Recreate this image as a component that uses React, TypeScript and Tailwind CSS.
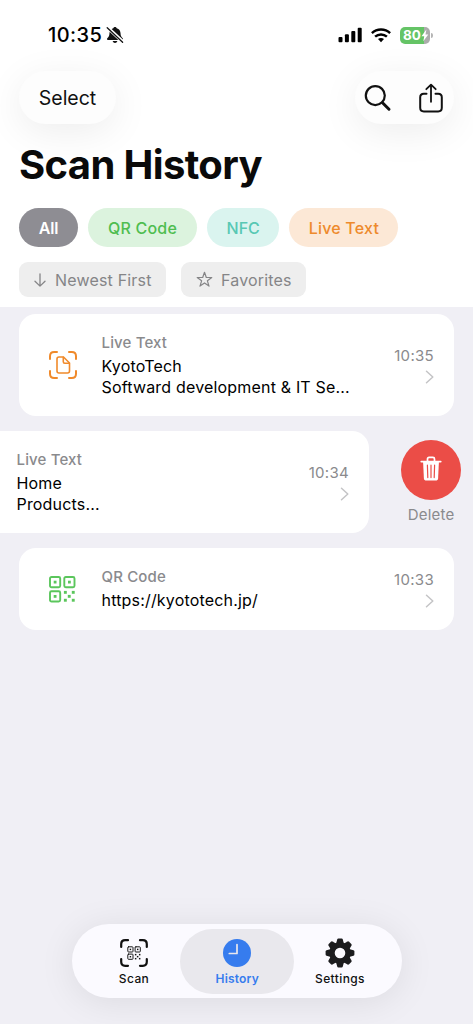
import React from 'react'

type ScanItem = {
    kind: "Live Text" | "QR Code";
    lines: string[];
    time: string;
}

const items: ScanItem[] = [
    { kind: "Live Text", lines: ["KyotoTech", "Softward development & IT Se..."], time: "10:35" },
    { kind: "Live Text", lines: ["Home", "Products..."], time: "10:34" },
    { kind: "QR Code", lines: ["https://kyototech.jp/"], time: "10:33" },
];

const filters = [
    { label: "All", style: "w-[59px] bg-[#8e8d93] text-white font-semibold tracking-[-0.2px]" },
    { label: "QR Code", style: "w-[109px] bg-[#dcf3de] text-[#4fbd50] font-medium tracking-[0.2px]" },
    { label: "NFC", style: "w-[72.4px] bg-[#daf4ef] text-[#58c8b4] font-medium" },
    { label: "Live Text", style: "w-[109px] bg-[#fce8d6] text-[#ee8a2c] font-medium tracking-[0.2px]" },
];

function StatusBar() {
    return (
        <div className="flex h-[71px] items-start pl-[48px] pr-[40px]">
            <div className="mt-[23px] flex w-full items-center text-black">
                <span className="text-[20px] leading-6 font-medium tracking-[0.4px] w-[54px] whitespace-nowrap">10:35</span>
                <svg className="ml-[4px]" width="18" height="18" viewBox="0 0 18 18">
                    <path d="M9 .9c-.9 0-1.600.6-1.700 1.400C4.800 3 3.600 4.800 3.500 7c-.1 3-.8 3.800-2.200 5.200-.6.6-.3 1.700.6 1.700h14.200c.9 0 1.200-1.100.6-1.700-1.400-1.400-2.100-2.200-2.200-5.200-.1-2.200-1.300-4-3.800-4.700C10.600 1.500 9.900.9 9 .9Z" fill="#111" />
                    <path d="M6.600 15h4.800c-.4 1.300-1.300 2-2.400 2s-2-.7-2.400-2Z" fill="#111" />
                    <path d="M1.500 1.500 17 16" stroke="#fff" strokeWidth="3.400" />
                    <path d="M1.200 1.800 16.600 16.300" stroke="#111" strokeWidth="1.300" strokeLinecap="round" />
                </svg>
                <svg className="ml-auto" width="25" height="16" viewBox="0 0 25 16">
                    <rect x="0.500" y="10" width="4" height="5.300" rx="1" />
                    <rect x="6.900" y="7.300" width="4" height="8" rx="1" />
                    <rect x="13.300" y="4" width="4" height="11.300" rx="1" />
                    <rect x="19.700" y="0.700" width="4" height="14.600" rx="1" />
                </svg>
                <svg className="ml-[8px]" width="20" height="15" viewBox="0 0 20 15" fill="none" stroke="#000" strokeWidth="2.500">
                    <path d="M.9 5.200C6 .4 14 .4 19.100 5.200" />
                    <path d="M4.100 8.700c3.400-3.100 8.400-3.100 11.800 0" />
                    <path d="m10 14.200-3-3.100c1.700-1.500 4.300-1.500 6 0Z" fill="#000" stroke="none" />
                </svg>
                <div className="ml-[9px] flex items-center">
                    <div className="flex h-[17px] w-[30px] items-center rounded-[5px] bg-linear-to-r from-[#65c466] from-80% to-[#acacac] to-80% pl-[3px]">
                        <span className="pt-px text-[13.500px] leading-none font-bold text-white tracking-[-0.1px]">80</span>
                        <svg className="shrink-0" width="8" height="13" viewBox="0 0 8 13">
                            <path d="M5.400.6.500 7.200h2.800L2.300 12.300l5-6.800H4.500Z" fill="#fff" />
                        </svg>
                    </div>
                    <div className="ml-[1px] h-[5px] w-[2px] rounded-r-full bg-[#b5b5b5]" />
                </div>
            </div>
        </div>
    )
}

function Toolbar() {
    return (
        <div className="flex h-[53px] justify-between pl-[19px] pr-[19px]">
            <button className="w-[97px] rounded-full bg-[#fdfdfd] pt-[2px] text-[19.500px] text-[#111] shadow-[0_8px_38px_rgba(0,0,0,0.075)]">
                Select
            </button>
            <div className="flex w-[99px] items-center rounded-full bg-[#fdfdfd] shadow-[0_8px_38px_rgba(0,0,0,0.075)]">
                <svg className="ml-[9px]" width="28" height="28" viewBox="0 0 28 28" fill="none" stroke="#111" strokeLinecap="round">
                    <circle cx="11.300" cy="11.600" r="9.500" strokeWidth="2.200" />
                    <path d="m18.500 18.700 6.500 6.500" strokeWidth="3" />
                </svg>
                <svg className="ml-[25px]" width="28" height="32" viewBox="0 0 28 32" fill="none" stroke="#111" strokeWidth="2" strokeLinecap="round" strokeLinejoin="round">
                    <path d="M9.500 11.700H6.800c-2.300 0-3.600 1.300-3.600 3.600v10.500c0 2.300 1.300 3.600 3.600 3.600h14.400c2.300 0 3.600-1.300 3.600-3.600V15.300c0-2.300-1.300-3.600-3.600-3.600h-2.700" />
                    <path d="M14 19.800V3M9.300 7.200 14 2.600l4.700 4.600" strokeWidth="1.800" />
                </svg>
            </div>
        </div>
    )
}

function Finder({ size }: { size: string }) {
    return (
        <svg className={size} viewBox="0 0 28 28" fill="none" stroke="#f08a2b" strokeWidth="2" strokeLinecap="round" strokeLinejoin="round">
            <path d="M1 8V5.200C1 2.500 2.500 1 5.200 1H8M20 1h2.800C25.500 1 27 2.500 27 5.200V8M27 20v2.800c0 2.700-1.500 4.200-4.200 4.200H20M8 27H5.200C2.500 27 1 25.500 1 22.800V20" />
            <path d="M10 6h4.500l6 6v8c0 1.300-.7 2-2 2H10c-1.300 0-2-.7-2-2V8c0-1.300.7-2 2-2Z" strokeWidth="1.600" />
            <path d="M14.300 6.300v4.400c0 1 .5 1.500 1.500 1.500h4.500" strokeWidth="1.600" />
        </svg>
    )
}

function QrShape() {
    return (
        <>
            <g fill="none" stroke="currentColor" strokeWidth="1.900">
                <rect x="1" y="1" width="10.200" height="10.200" rx="1.500" />
                <rect x="15.300" y="1" width="10.200" height="10.200" rx="1.500" />
                <rect x="1" y="15.300" width="10.200" height="10.200" rx="1.500" />
            </g>
            <g fill="currentColor">
                <rect x="4.700" y="4.700" width="2.800" height="2.800" />
                <rect x="19" y="4.700" width="2.800" height="2.800" />
                <rect x="4.700" y="19" width="2.800" height="2.800" />
                <rect x="14.900" y="14.900" width="2.900" height="2.900" />
                <rect x="22.800" y="14.900" width="2.900" height="2.900" />
                <rect x="18.800" y="18.900" width="2.900" height="2.900" />
                <rect x="14.900" y="22.800" width="2.900" height="2.900" />
                <rect x="22.800" y="22.800" width="2.900" height="2.900" />
            </g>
        </>
    )
}

function HistoryCard({ item }: { item: ScanItem }) {
    return (
        <div className="flex w-[435px] shrink-0 rounded-[17px] bg-white pl-[30px] pr-[20px]">
            <div className="flex w-[52.500px] shrink-0 items-center">
                {item.kind === "Live Text" ? (
                    <Finder size="w-[28px] h-[28px]" />
                ) : (
                    <svg className="w-[27px] h-[27px] text-[#5bc65c]" viewBox="0 0 27 27">
                        <QrShape />
                    </svg>
                )}
            </div>
            <div className="flex grow flex-col pt-[18px] pb-[18px]">
                <p className="mb-[3px] text-[15px] leading-[21px] font-medium tracking-[0.15px] text-[#8a8a8d]">{item.kind}</p>
                {item.lines.map((line) => (
                    <p key={line} className="text-[16px] leading-[20.500px] tracking-[0.18px] text-black whitespace-nowrap">{line}</p>
                ))}
            </div>
            <div className="flex flex-col items-end justify-center">
                <span className="text-[15px] leading-[20px] tracking-[0.3px] text-[#8a8a8d]">{item.time}</span>
                <svg className="mt-[4px]" width="9" height="14" viewBox="0 0 9 14" fill="none" stroke="#c4c4c6" strokeWidth="1.500" strokeLinecap="round" strokeLinejoin="round">
                    <path d="m1.500 1.200 6.300 5.800-6.300 5.800" />
                </svg>
            </div>
        </div>
    )
}

function DeleteAction() {
    return (
        <div className="ml-[32px] mt-[9px] flex w-[60px] shrink-0 flex-col items-center">
            <button className="flex h-[60px] w-[60px] items-center justify-center rounded-full bg-[#eb4d47]">
                <svg className="mb-[2px]" width="22" height="26" viewBox="0 0 22 26">
                    <path d="M7.500 5V3c0-1 .6-1.600 1.600-1.600h3.800c1 0 1.600.6 1.600 1.600v2" fill="none" stroke="#fff" strokeWidth="1.700" />
                    <path d="M1.300 5.600h19.400" stroke="#fff" strokeWidth="1.800" strokeLinecap="round" />
                    <path d="M3.100 6h15.800l-.8 16.400c-.1 1.400-1 2.200-2.400 2.200H6.300c-1.400 0-2.300-.8-2.400-2.200Z" fill="#fff" />
                    <path d="m7.400 9.200.4 12.400M11 9.200V21.600M14.600 9.200 14.200 21.600" stroke="#eb4d47" strokeWidth="1.200" strokeLinecap="round" />
                </svg>
            </button>
            <span className="mt-[5px] text-[15px] leading-[20px] tracking-[0.2px] text-[#8a8a8d]">Delete</span>
        </div>
    )
}

function GearIcon() {
    return (
        <svg width="30" height="30" viewBox="-15 -15 30 30">
            {[0, 45, 90, 135, 180, 225, 270, 315].map((angle) => (
                <path key={angle} transform={`rotate(${angle})`} d="M-4-9-2.800-13.500q.3-.9 1.200-.9h3.200q.9 0 1.200.9L4-9Z" fill="#1c1c1e" />
            ))}
            <circle r="8" fill="none" stroke="#1c1c1e" strokeWidth="5.400" />
        </svg>
    )
}

function TabBar() {
    return (
        <nav className="mx-auto flex h-[74px] w-[330px] items-center rounded-full bg-[#fbfaff] pl-[14.500px] text-[12px] leading-[16px] font-medium tracking-[0.4px] text-[#111] shadow-[0_4px_36px_rgba(0,0,0,0.085)]">
            <div className="flex h-[65px] w-[95px] flex-col items-center pt-[10px]">
                <svg width="28" height="28" viewBox="0 0 28 28" fill="none" stroke="#111" strokeWidth="2.200" strokeLinecap="round">
                    <path d="M1.200 8V5.200c0-2.600 1.400-4 4-4H8M20 1.200h2.800c2.600 0 4 1.400 4 4V8M26.800 20v2.800c0 2.600-1.400 4-4 4H20M8 26.800H5.200c-2.600 0-4-1.400-4-4V20" />
                    <g stroke="none" transform="translate(7.300 7.300) scale(.51)">
                        <QrShape />
                    </g>
                </svg>
                <span className="mt-[4px] ml-[1px]">Scan</span>
            </div>
            <div className="-ml-[1px] flex h-[65px] w-[113.500px] flex-col items-center rounded-full bg-[#e9e8ed] pt-[10px] font-semibold tracking-[0.2px] text-[#367cee]">
                <svg width="28" height="28" viewBox="0 0 28 28">
                    <circle cx="14" cy="14" r="14" fill="#367cee" />
                    <path d="M14 5.500V14.500H6.300" fill="none" stroke="#e9e8ed" strokeWidth="1.700" strokeLinecap="round" strokeLinejoin="round" />
                </svg>
                <span className="mt-[4px] ml-[1px]">History</span>
            </div>
            <div className="flex h-[65px] w-[93px] flex-col items-center pt-[9px]">
                <GearIcon />
                <span className="mt-[3px]">Settings</span>
            </div>
        </nav>
    )
}

export default function App() {
    return (
        <div className="flex h-[1024px] w-[473px] flex-col overflow-hidden bg-[#f0eff5] font-['Inter',sans-serif]">
            <header className="h-[307px] shrink-0 bg-white">
                <StatusBar />
                <Toolbar />
                <h1 className="mt-[17px] ml-[19px] text-[40px] leading-[48px] font-bold tracking-[-0.65px] text-[#0a0a0a] whitespace-nowrap">Scan History</h1>
                <div className="mt-[19px] ml-[19px] flex gap-[10px]">
                    {filters.map((filter) => (
                        <button key={filter.label} className={`h-[39px] rounded-full text-[16px] ${filter.style}`}>
                            {filter.label}
                        </button>
                    ))}
                </div>
                <div className="mt-[15px] ml-[19px] flex gap-[15px] text-[16px] tracking-[0.18px] text-[#858587]">
                    <button className="flex h-[35px] w-[147px] items-center rounded-[9px] bg-[#eeeeee] pl-[15px] whitespace-nowrap">
                        <svg className="mr-[9px]" width="12" height="14" viewBox="0 0 12 14" fill="none" stroke="currentColor" strokeWidth="1.300" strokeLinecap="round" strokeLinejoin="round">
                            <path d="M6 .8v12.200M1 8.200l5 4.900 5-4.900" />
                        </svg>
                        Newest First
                    </button>
                    <button className="flex h-[35px] w-[125px] items-center rounded-[9px] bg-[#eeeeee] pl-[15px] whitespace-nowrap">
                        <svg className="mr-[8px]" width="17" height="17" viewBox="0 0 17 17" fill="none" stroke="currentColor" strokeWidth="1.200" strokeLinejoin="round">
                            <path d="m8.500 1.300 1.800 5.200h5.500l-4.400 3.300 1.600 5.300-4.500-3.200L4 15.100l1.600-5.300-4.400-3.300h5.500Z" />
                        </svg>
                        Favorites
                    </button>
                </div>
            </header>
            <main className="flex grow flex-col gap-[15px] pt-[7px]">
                <div className="flex h-[102px] pl-[19px]">
                    <HistoryCard item={items[0]} />
                </div>
                <div className="-ml-[66px] flex h-[102px]">
                    <HistoryCard item={items[1]} />
                    <DeleteAction />
                </div>
                <div className="flex h-[82px] pl-[19px]">
                    <HistoryCard item={items[2]} />
                </div>
            </main>
            <div className="h-[100px] shrink-0">
                <TabBar />
            </div>
        </div>
    )
}
